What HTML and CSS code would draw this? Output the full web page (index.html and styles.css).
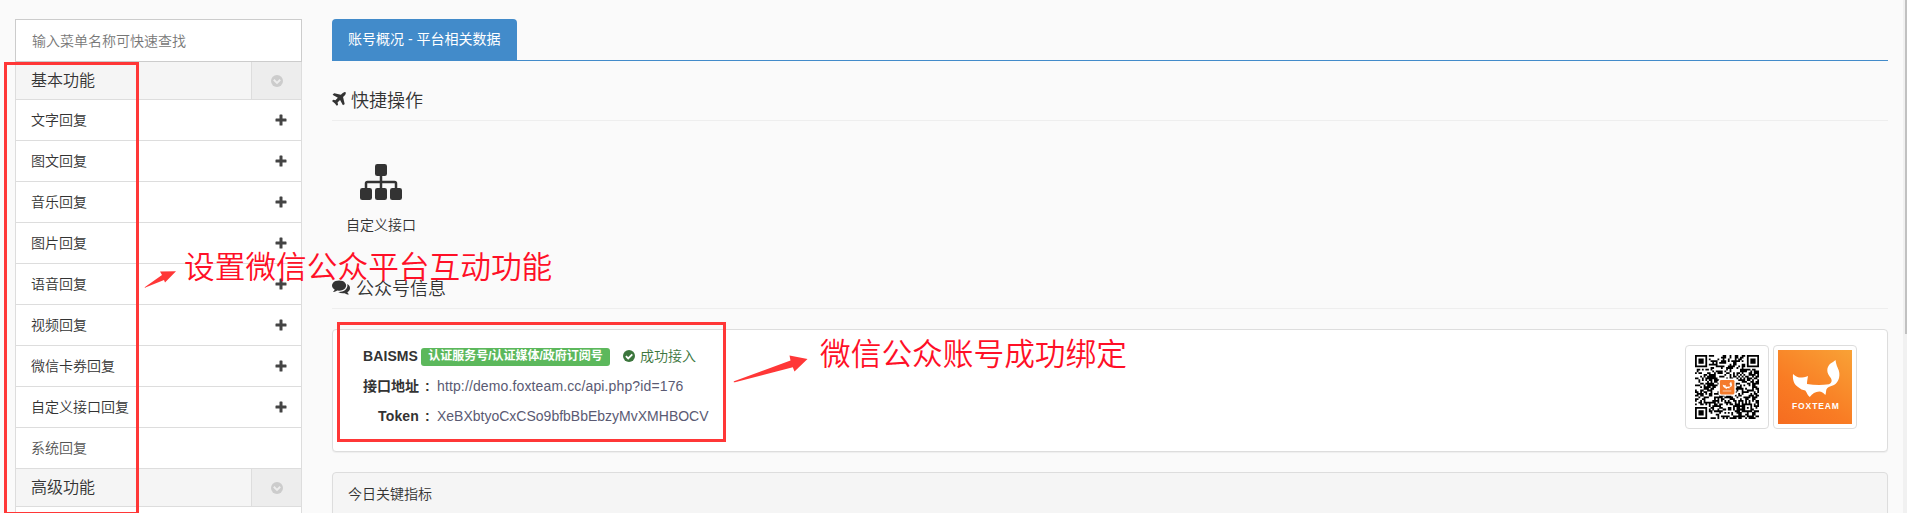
FILE: index.html
```html
<!DOCTYPE html>
<html lang="zh-CN">
<head>
<meta charset="utf-8">
<title>账号概况</title>
<link rel="stylesheet" href="styles.css">
</head>
<body>
<svg class="defs" width="0" height="0">
  <symbol id="plus" viewBox="0 0 12 12"><path d="M4.500 1.100Q4.500.5 5.100.5h1.800q.6 0 .6.6v3.400h3.400q.6 0 .6.6v1.800q0 .6-.6.6H7.500v3.400q0 .6-.6.6H5.100q-.6 0-.6-.6V7.500H1.100Q.5 7.500.5 6.900V5.100q0-.6.6-.6h3.400z"/></symbol>
  <symbol id="down" viewBox="0 0 12 12"><circle cx="6" cy="6" r="6"/><path d="M2.800 4.800 6 7.900l3.200-3.100" fill="none" stroke="#ededed" stroke-width="1.900"/></symbol>
  <symbol id="fox" viewBox="0 0 74 74"><path fill="#fff" d="M15 24c2 2 4 3 6 3.500 3 .2 6-.4 9-1.500-.5 3-1 5.500-1 8 7 1 14 1.400 22 .2 4-1.800 3-5.200.3-8.200-3.500-5-2-10.500 2-13 2-1.200 3-2 4.200-3 .5 4.500 2 7 3.300 10.500 2 7-1 13.500-6.800 15.300-3 1-4.700 1.500-5.700 4-.4 2.500-.3 4-1 5.200-2-2-3.500-3.500-6-3.500-4 .2-7 2-9.500 5.500-2-1.500-2.800-4-4.500-6.500-2.500-.3-5-1.500-7.300-3.500C15.500 34 14.500 29 15 24z"/></symbol>
</svg>
<div class="page">
  <aside class="sidebar">
    <div class="search">输入菜单名称可快速查找</div>
    <div class="group"><span>基本功能</span><i class="toggle"><svg class="i12"><use href="#down"/></svg></i></div>
    <div class="item">文字回复<svg class="i12"><use href="#plus"/></svg></div>
    <div class="item">图文回复<svg class="i12"><use href="#plus"/></svg></div>
    <div class="item">音乐回复<svg class="i12"><use href="#plus"/></svg></div>
    <div class="item">图片回复<svg class="i12"><use href="#plus"/></svg></div>
    <div class="item">语音回复<svg class="i12"><use href="#plus"/></svg></div>
    <div class="item">视频回复<svg class="i12"><use href="#plus"/></svg></div>
    <div class="item">微信卡券回复<svg class="i12"><use href="#plus"/></svg></div>
    <div class="item">自定义接口回复<svg class="i12"><use href="#plus"/></svg></div>
    <div class="item muted">系统回复</div>
    <div class="group"><span>高级功能</span><i class="toggle"><svg class="i12"><use href="#down"/></svg></i></div>
    <div class="item"></div>
  </aside>
  <main class="main">
    <nav class="tabs"><a class="tab">账号概况 - 平台相关数据</a></nav>
    <h5 class="section first">
      <svg class="plane" viewBox="192 128 1408 1536"><path d="M1568 160q44 52 12 148t-108 172l-161 161 160 696q5 19-12 33l-128 96q-7 6-19 6-4 0-7-1-15-3-21-16l-279-508-259 259 53 194q5 17-8 31l-96 96q-9 9-23 9h-2q-15-2-24-13l-189-252-252-189q-11-7-13-23-1-13 9-25l96-97q9-9 23-9 6 0 8 1l194 53 259-259-508-279q-14-8-17-24-2-16 9-27l128-128q14-13 30-8l665 159 160-160q76-76 172-108t148 12z"/></svg><span>快捷操作</span></h5>
    <a class="shortcut">
      <svg class="sitemap" viewBox="0 0 42 36"><rect x="15" width="12" height="12" rx="2.300"/><rect y="24" width="12" height="12" rx="2.300"/><rect x="15" y="24" width="12" height="12" rx="2.300"/><rect x="30" y="24" width="12" height="12" rx="2.300"/><path d="M21 11v14M6 25v-5.500q0-1.500 1.500-1.500h27q1.500 0 1.500 1.500V25" fill="none" stroke="#333" stroke-width="2.500"/></svg>
      <span>自定义接口</span>
    </a>
    <h5 class="section second">
      <svg class="comments" viewBox="0 256 1792 1408"><path d="M1408 768q0 139-94 257t-256.500 186.500-353.500 68.500q-86 0-176-16-124 88-278 128-36 9-86 16h-3q-11 0-20.500-8t-11.500-21q-1-3-1-6.500t.5-6.500 2-6l2.500-5 3.500-5.500 4-5 4.500-5 4-4.500q5-6 23-25t26-29.500 22.500-29 25-38.500 20.500-44q-124-72-195-177t-71-224q0-139 94-257t256.500-186.500 353.500-68.500 353.500 68.500 256.500 186.500 94 257zm384 256q0 120-71 224.500t-195 176.500q10 24 20.500 44t25 38.500 22.500 29 26 29.500 23 25q1 1 4 4.500t4.500 5 4 5 3.500 5.500l2.500 5 2 6 .5 6.500-1 6.500q-3 14-13 22t-22 7q-50-7-86-16-154-40-278-128-90 16-176 16-271 0-472-132 58 4 88 4 161 0 309-45t264-129q125-92 192-212t67-254q0-77-23-152 129 71 204 178t75 230z"/></svg><span>公众号信息</span></h5>
    <section class="panel account">
      <div class="info">
        <div class="row"><b class="name">BAISMS</b><span class="badge">认证服务号/认证媒体/政府订阅号</span><span class="ok"><svg class="i12" viewBox="0 0 12 12"><circle cx="6" cy="6" r="6" fill="#3c763d"/><path d="M2.900 6.100 5.200 8.400 9.300 4.300" fill="none" stroke="#fff" stroke-width="1.800"/></svg>成功接入</span></div>
        <div class="row"><b class="label">接口地址</b><b class="colon">:</b><span class="value url">http://demo.foxteam.cc/api.php?id=176</span></div>
        <div class="row"><b class="label latin">Token</b><b class="colon">:</b><span class="value token">XeBXbtyoCxCSo9bfbBbEbzyMvXMHBOCV</span></div>
      </div>
      <div class="thumbs">
        <div class="thumb"><svg class="qr" id="qr" viewBox="0 0 37 37"></svg></div>
        <div class="thumb"><div class="logo"><svg class="foxmark"><use href="#fox"/></svg><span class="brand">FOXTEAM</span></div></div>
      </div>
    </section>
    <section class="panel stats">今日关键指标</section>
  </main>
</div>
<div class="track"><div class="grip"></div></div>
<div class="mark menu-box"></div>
<div class="mark info-box"></div>
<svg class="arrow arrow-menu" viewBox="0 0 34 20"><path d="M1 17 18 5 16 1.500 32 1.300 21 12.500 20 10 2 17.300Q0 18.500 1 17z"/></svg>
<svg class="arrow arrow-info" viewBox="0 0 76 30"><path d="M1 26.200 57.500 5.500 56.500.6 74.500 4 61.500 16.500 59.800 12.200 2 27.300Q0 27.500 1 26.200z"/></svg>
<div class="note note-menu">设置微信公众平台互动功能</div>
<div class="note note-info">微信公众账号成功绑定</div>
<script src="qr.js"></script>
</body>
</html>
```
FILE: styles.css
```css
* { box-sizing: border-box; }
body {
  margin: 0;
  width: 1907px;
  height: 513px;
  overflow: hidden;
  position: relative;
  background: #fafafa;
  color: #333;
  font: 350 14px/20px "Liberation Sans", "Noto Sans CJK SC", sans-serif;
}
svg { display: block; fill: currentColor; flex: none; }
.defs { position: absolute; }
.page { display: flex; gap: 30px; padding: 19px 0 0 15px; height: 513px; overflow: hidden; }
.sidebar { width: 287px; flex: none; border: 1px solid #ddd; border-top: 0; background: #fff; height: 560px; }
.search { height: 43px; margin: 0 -1px; padding: 0 16px; border: 1px solid #ccc; line-height: 42px; color: #777; }
.group { display: flex; justify-content: space-between; height: 38px; border-bottom: 1px solid #ddd; background: #f5f5f5; padding-left: 15px; font-size: 16px; line-height: 37px; }
.toggle { width: 50px; border-left: 1px solid #ddd; background: #ededed; color: #ccc; display: flex; align-items: center; padding-left: 19px; }
.i12 { width: 12px; height: 12px; }
.item { display: flex; align-items: center; justify-content: space-between; height: 41px; border-bottom: 1px solid #ddd; padding: 0 14px 0 15px; }
.item .i12 { color: #444; }
.muted { color: #555; }
.main { width: 1556px; flex: none; }
.tabs { display: flex; height: 42px; border-bottom: 1px solid #428bca; }
.tab { width: 185px; padding-left: 16px; height: 42px; line-height: 41px; background: #428bca; color: #fff; border-radius: 4px 4px 0 0; white-space: nowrap; font-weight: 400; }
.section { display: flex; align-items: center; margin: 0; font-size: 18px; font-weight: 350; line-height: 20px; border-bottom: 1px solid #eee; }
.section span { padding-top: 3px; }
.first { margin-top: 28px; height: 32px; padding-bottom: 11px; gap: 5px; }
.plane { width: 14px; height: 15px; }
.shortcut { display: flex; flex-direction: column; align-items: center; gap: 15px; width: 98px; margin-top: 43px; }
.sitemap { width: 42px; height: 36px; }
.second { margin-top: 42px; height: 32px; padding-bottom: 11px; gap: 6px; }
.comments { width: 18px; height: 15px; }
.panel { background: #fff; border: 1px solid #ddd; border-radius: 4px; box-shadow: 0 1px 1px rgba(0, 0, 0, .05); }
.account { display: flex; justify-content: space-between; height: 123px; margin-top: 20px; padding: 10px 30px; }
.row { display: flex; align-items: center; height: 30px; white-space: nowrap; }
.row:first-child { height: 31px; }
.row b { font-weight: 700; }
.name { width: 58px; letter-spacing: .1px; }
.badge { width: 189px; height: 18px; background: #5cb85c; color: #fff; font-size: 12px; font-weight: 700; line-height: 17px; text-align: center; border-radius: 3px; margin-top: 3px; }
.ok { display: flex; align-items: center; gap: 5px; margin-left: 13px; color: #3c763d; }
.label { width: 56px; text-align: right; }
.latin { letter-spacing: .15px; }
.colon { width: 18px; padding-left: 6px; }
.value { color: #5a5a73; }
.url { letter-spacing: .13px; }
.thumbs { display: flex; gap: 4px; padding-top: 5px; }
.thumb { width: 84px; height: 84px; padding: 4px; border: 1px solid #ddd; border-radius: 4px; }
.qr { width: 64px; height: 64px; margin: 5px; }
.logo { position: relative; width: 74px; height: 74px; background: linear-gradient(215deg, #f9a236, #f97c24 60%, #f56c20); }
.foxmark { width: 74px; height: 74px; }
.brand { position: absolute; left: 14px; top: 50px; color: #fff; font: 700 8.500px/12px "Liberation Sans", Arial, sans-serif; letter-spacing: .9px; }
.stats { height: 80px; margin-top: 20px; padding: 11px 15px; background: #f5f5f5; }
.track { position: absolute; right: 0; top: 0; width: 4px; height: 513px; background: #f1f1f1; }
.grip { width: 2px; height: 334px; margin-left: 2px; background: #c1c1c1; }
.mark { position: absolute; border: 3px solid #ff3737; }
.menu-box { left: 4px; top: 62px; width: 135px; height: 451px; border-bottom-width: 1px; }
.info-box { left: 337px; top: 322px; width: 389px; height: 120px; }
.arrow { position: absolute; color: #ff3737; }
.arrow-menu { left: 144px; top: 270px; width: 34px; height: 20px; }
.arrow-info { left: 733px; top: 355px; width: 76px; height: 30px; }
.note { position: absolute; color: #ff0f27; font-size: 30.700px; font-weight: 350; line-height: 40px; white-space: nowrap; }
.note-menu { left: 184px; top: 248px; }
.note-info { left: 820px; top: 335px; }
```
FILE: qr.js
```js
(function () {
  var n = 37, seed = 176, d = "";
  function rand() { seed = (seed * 1103515245 + 12345) % 2147483648; return seed / 2147483648; }
  // Concentric squares: dark ring, light ring, dark core.
  function finder(x, y, cx, cy) {
    var r = Math.max(Math.abs(x - cx), Math.abs(y - cy));
    return r > 4 ? null : r === 3 || r < 2;
  }
  for (var y = 0; y < n; y++) {
    for (var x = 0; x < n; x++) {
      var on = rand() < 0.53;
      [[3, 3], [33, 3], [3, 33]].forEach(function (c) {
        var f = finder(x, y, c[0], c[1]);
        if (f !== null) on = f;
      });
      var a = Math.max(Math.abs(x - 30), Math.abs(y - 30));
      if (a < 3) on = a !== 1;
      if (on) d += "M" + x + " " + y + "h1.03v1.03h-1.03z";
    }
  }
  document.getElementById("qr").innerHTML =
    '<path fill="#000" d="' + d + '"/>' +
    '<rect x="13.600" y="13.600" width="10" height="10" rx="1.500" fill="#fff"/>' +
    '<rect x="14.400" y="14.400" width="8.400" height="8.400" rx=".8" fill="#f47b2c"/>' +
    '<use href="#fox" x="14.400" y="14.400" width="8.400" height="8.400"/>' +
    '<path d="M16 20.800h5" stroke="#fff" stroke-width=".6" opacity=".6"/>';
})();
```
